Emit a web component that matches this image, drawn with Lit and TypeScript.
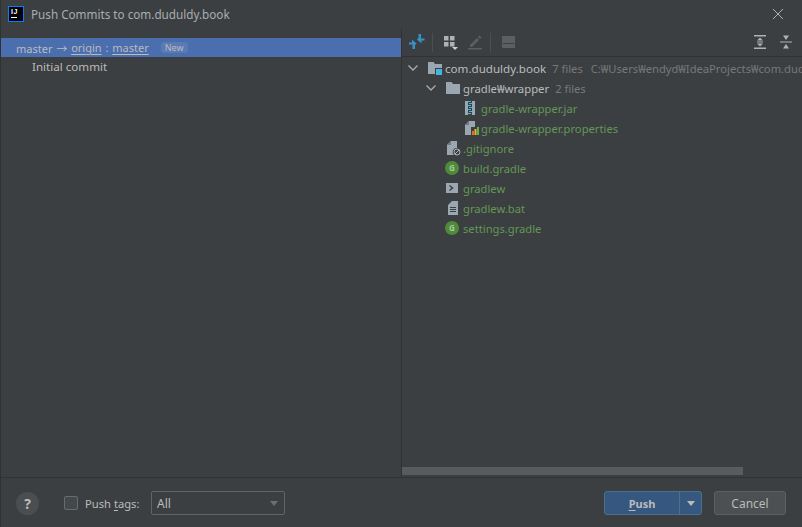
import { LitElement, html, css, svg } from "lit";
import { customElement } from "lit/decorators.js";

const chevron = html`<svg class="chev" width="12" height="12" viewBox="0 0 12 12"><path d="M1.500 3.500 6 8l4.500-4.500" fill="none" stroke="#a9adb0" stroke-width="1.300"/></svg>`;
const folder = (badge: boolean) => html`<svg width="16" height="16" viewBox="0 0 16 16"><path d="M1 2h5.500l1.500 2h7v10H1z" fill="#9aa7b0"/>${badge ? svg`<rect x="8" y="8" width="8" height="8" fill="#3c3f41"/><rect x="9" y="9" width="6" height="6" fill="#40b6e0"/>` : ""}</svg>`;
const jar = html`<svg width="16" height="16" viewBox="0 0 16 16"><rect x="2" y="1" width="10" height="14" fill="#9aa7b0"/><rect x="5" y="1" width="4" height="14" fill="#3c3f41"/><path d="M5 1.500h3M6 3.500h3M5 5.500h3M6 7.500h3M5 9.500h3M6 11.500h3M5 13.500h3" stroke="#40b6e0" stroke-width="1"/></svg>`;
const props = html`<svg width="16" height="16" viewBox="0 0 16 16"><path d="M2 5l4-4h6v6H8v8H2z" fill="#9aa7b0"/><path d="M2 5h4V1z" fill="#6e7a82"/><rect x="9" y="11" width="2" height="4" fill="#f26522"/><rect x="11.500" y="9" width="2" height="6" fill="#f4af3d"/><rect x="14" y="7" width="2" height="8" fill="#62b543"/></svg>`;
const ignore = html`<svg width="16" height="16" viewBox="0 0 16 16"><path d="M2 5l4-4h6v7a4 4 0 0 0-3 7H2z" fill="#9aa7b0"/><path d="M2 5h4V1z" fill="#6e7a82"/><circle cx="12" cy="12" r="3" fill="none" stroke="#afb1b3" stroke-width="1"/><path d="M10 14 14 10" stroke="#afb1b3"/></svg>`;
const gradleIcon = html`<svg width="16" height="16" viewBox="0 0 16 16"><circle cx="7" cy="8" r="7" fill="#4e8a3a"/><text x="7" y="10.800" font-size="8" font-weight="700" text-anchor="middle" fill="#a9c79b" font-family="Noto Sans">G</text></svg>`;
const shell = html`<svg width="16" height="16" viewBox="0 0 16 16"><rect x="1" y="3" width="12" height="10" fill="#9aa7b0"/><path d="M4.500 5.500 7.500 8l-3 2.500" fill="none" stroke="#3c3f41" stroke-width="1.500"/></svg>`;
const bat = html`<svg width="16" height="16" viewBox="0 0 16 16"><path d="M3 5l4-4h6v14H3z" fill="#9aa7b0"/><path d="M5 7.500h6M5 9.500h6M5 11.500h6" stroke="#3c3f41"/></svg>`;

@customElement("app-root")
export class AppRoot extends LitElement {
  static styles = css`
    :host { display: block; width: 802px; height: 527px; background: #3c3f41; color: #bbbbbb;
      font-family: "Noto Sans", "Noto Sans CJK KR", sans-serif; font-size: 11.200px; overflow: hidden; }
    * { box-sizing: border-box; }
    svg { display: block; flex: none; }
    .win { height: 527px; display: flex; flex-direction: column; border-left: 1px solid #2f3133; }
    .title { height: 28px; flex: none; display: flex; align-items: center; padding: 0 18px 1px 7px; gap: 7px; color: #a9adb0; font-size: 11.700px; }
    .logo { width: 16px; height: 16px; background: #000; border: 1px solid #087cfa; display: flex; flex-direction: column; padding: 1px 2px; flex: none; }
    .logo b { color: #fff; font: 700 7px/8px "Liberation Sans", sans-serif; letter-spacing: 0.500px; }
    .logo i { display: block; width: 6px; height: 1px; background: #fff; margin-top: 1px; }
    .title .name { flex: 1; }
    .main { flex: 1; min-height: 0; display: flex; border-bottom: 1px solid #323232; }
    .left { width: 401px; flex: none; border-right: 1px solid #323232; padding-top: 10px; }
    .sel { height: 19px; background: #4b6eaf; color: #bbbbbb; display: flex; align-items: center; padding-left: 15px; white-space: pre; font-size: 11px; word-spacing: 1px; }
    .sel u { text-underline-offset: 2px; }
    .tag { margin-left: 12px; background: #5a7ab5; color: #bbbbbb; border-radius: 3px; font-size: 9px; padding: 0 4px; line-height: 11px; }
    .commit { height: 20px; display: flex; align-items: center; padding-left: 31px; font-size: 11.600px; padding-bottom: 1px; }
    .right { flex: 1; min-width: 0; display: flex; flex-direction: column; }
    .bar { height: 29px; flex: none; border-bottom: 1px solid #323232; display: flex; align-items: center; padding: 0 7px; }
    .bar .sep { width: 1px; height: 19px; background: #4c4f51; margin: 0 8px 0 7px; }
    .bar .sp { flex: 1; }
    .btn { width: 16px; height: 16px; flex: none; }
    .bar .s1 { margin-left: 2px; }
    .bar .ml { margin-left: 8px; }
    .bar .gap { margin-left: 11px; }
    .tree { flex: 1; min-height: 0; overflow: hidden; padding-top: 1px; position: relative; }
    .row { height: 20px; display: flex; align-items: center; white-space: nowrap; gap: 2px; }
    .row.l0 { padding-left: 5px; }
    .row.l1c { padding-left: 23px; }
    .row.l2 { padding-left: 61px; }
    .row.l1 { padding-left: 43px; }
    .row .chev { margin-right: 6px; }
    .green { color: #629755; }
    .dir { color: #bbbbbb; font-size: 11.600px; }
    .dir.sub { font-size: 11.300px; }
    .dim { color: #787878; margin-left: 4px; }
    .path { margin-left: 6px; color: #787878; }
    .track { height: 11px; flex: none; padding: 1px 0 2px; }
    .thumb { width: 341px; height: 8px; background: #595b5d; }
    .foot { height: 49px; flex: none; display: flex; align-items: center; padding: 1px 16px 0 15px; }
    .help { width: 23px; height: 23px; border-radius: 50%; background: #4b4e50; color: #bbbbbb; font: 700 14px/23px "Noto Sans", sans-serif; text-align: center; flex: none; }
    .cb { width: 14px; height: 14px; border: 1px solid #6b6b6b; border-radius: 2px; background: #43494a; margin-left: 25px; flex: none; }
    .lbl { margin-left: 7px; width: 54px; white-space: nowrap; }
    .lbl u { text-underline-offset: 2px; }
    .combo { margin-left: 12px; width: 134px; height: 24px; border: 1px solid #646464; border-radius: 2px; background: #3c3f41; display: flex; align-items: center; justify-content: space-between; padding: 1px 6px 0 5px; font-size: 12px; }
    .arrow { width: 0; height: 0; border-left: 4.500px solid transparent; border-right: 4.500px solid transparent; border-top: 5px solid #6e6e6e; }
    .grow { flex: 1; }
    .push { width: 98px; height: 24px; background: #365880; border: 1px solid #4c708c; border-radius: 3px; display: flex; color: #bbbbbb; font-weight: 700; font-size: 11px; }
    .push span { flex: 1; text-align: center; line-height: 23px; border-right: 1px solid #4c708c; }
    .push span u { text-underline-offset: 2px; }
    .drop { width: 21px; display: flex; align-items: center; justify-content: center; }
    .push .arrow { border-top-color: #bbbbbb; }
    .cancel { width: 72px; height: 24px; margin-left: 12px; background: #4c5052; border: 1px solid #5e6060; border-radius: 3px; text-align: center; line-height: 23px; color: #bbbbbb; font-size: 12px; }
  `;

  render() {
    return html`<div class="win">
      <div class="title">
        <div class="logo"><b>IJ</b><i></i></div>
        <div class="name">Push Commits to com.duduldy.book</div>
        <svg width="12" height="12" viewBox="0 0 12 12"><path d="M1 1l10 10M11 1 1 11" stroke="#afb1b3" stroke-width="1"/></svg>
      </div>
      <div class="main">
        <div class="left">
          <div class="sel">master → <u>origin</u> : <u>master</u><span class="tag">New</span></div>
          <div class="commit">Initial commit</div>
        </div>
        <div class="right">
          <div class="bar">
            <svg class="btn" viewBox="0 0 16 16"><path d="M0 8.500h3V5.500l4.500 4-1.500 1.500V15H3.500V10.500H0zM15.500 6.500h-3V9.500L8 5.500 9.500 4V0h2.500v4.500h3.500z" fill="#3592c4"/></svg>
            <div class="sep"></div>
            <svg class="btn s1" viewBox="0 0 16 16"><path d="M1 2h4.500v4.500H1zM7 2h4.500v4.500H7zM1 8h4.500v4.500H1zM7 8h4.500v4.500H7z" fill="#afb1b3"/><path d="M9 13h6l-3 3z" fill="#d0d0d0"/></svg>
            <svg class="btn ml" viewBox="0 0 16 16"><path d="M1 14h14v1.500H1zM3 11l7-7 2 2-7 7H3zM11 3l1.500-1.500 2 2L13 5z" fill="#5c5f61"/></svg>
            <div class="sep"></div>
            <svg class="btn s1" viewBox="0 0 16 16"><path d="M1 2h13v12H1z" fill="#5c5f61"/><path d="M2 9.500h11" stroke="#3c3f41"/></svg>
            <div class="sp"></div>
            <svg class="btn" viewBox="0 0 16 16"><path d="M2 1h12v1.500H2zM2 13.500h12V15H2zM5 6.500h6L8 3.500zM5 9.500h6L8 12.500zM5 7.500h6v1H5z" fill="#afb1b3"/></svg>
            <svg class="btn gap" viewBox="0 0 16 16"><path d="M1 7.500h12v1H1zM4 1.500h6l-3 4.500zM4 14.500h6L7 10z" fill="#afb1b3"/></svg>
          </div>
          <div class="tree">
            <div class="row l0">${chevron}${folder(true)}<span class="dir">com.duduldy.book</span><span class="dim">7 files</span><span class="path">C:₩Users₩endyd₩IdeaProjects₩com.duduldy.book</span></div>
            <div class="row l1c">${chevron}${folder(false)}<span class="dir sub">gradle₩wrapper</span><span class="dim">2 files</span></div>
            <div class="row l2">${jar}<span class="green">gradle-wrapper.jar</span></div>
            <div class="row l2">${props}<span class="green">gradle-wrapper.properties</span></div>
            <div class="row l1">${ignore}<span class="green">.gitignore</span></div>
            <div class="row l1">${gradleIcon}<span class="green">build.gradle</span></div>
            <div class="row l1">${shell}<span class="green">gradlew</span></div>
            <div class="row l1">${bat}<span class="green">gradlew.bat</span></div>
            <div class="row l1">${gradleIcon}<span class="green">settings.gradle</span></div>
          </div>
          <div class="track"><div class="thumb"></div></div>
        </div>
      </div>
      <div class="foot">
        <div class="help">?</div>
        <div class="cb"></div>
        <div class="lbl">Push <u>t</u>ags:</div>
        <div class="combo"><span>All</span><div class="arrow"></div></div>
        <div class="grow"></div>
        <div class="push"><span><u>P</u>ush</span><div class="drop"><div class="arrow"></div></div></div>
        <div class="cancel">Cancel</div>
      </div>
    </div>`;
  }
}
